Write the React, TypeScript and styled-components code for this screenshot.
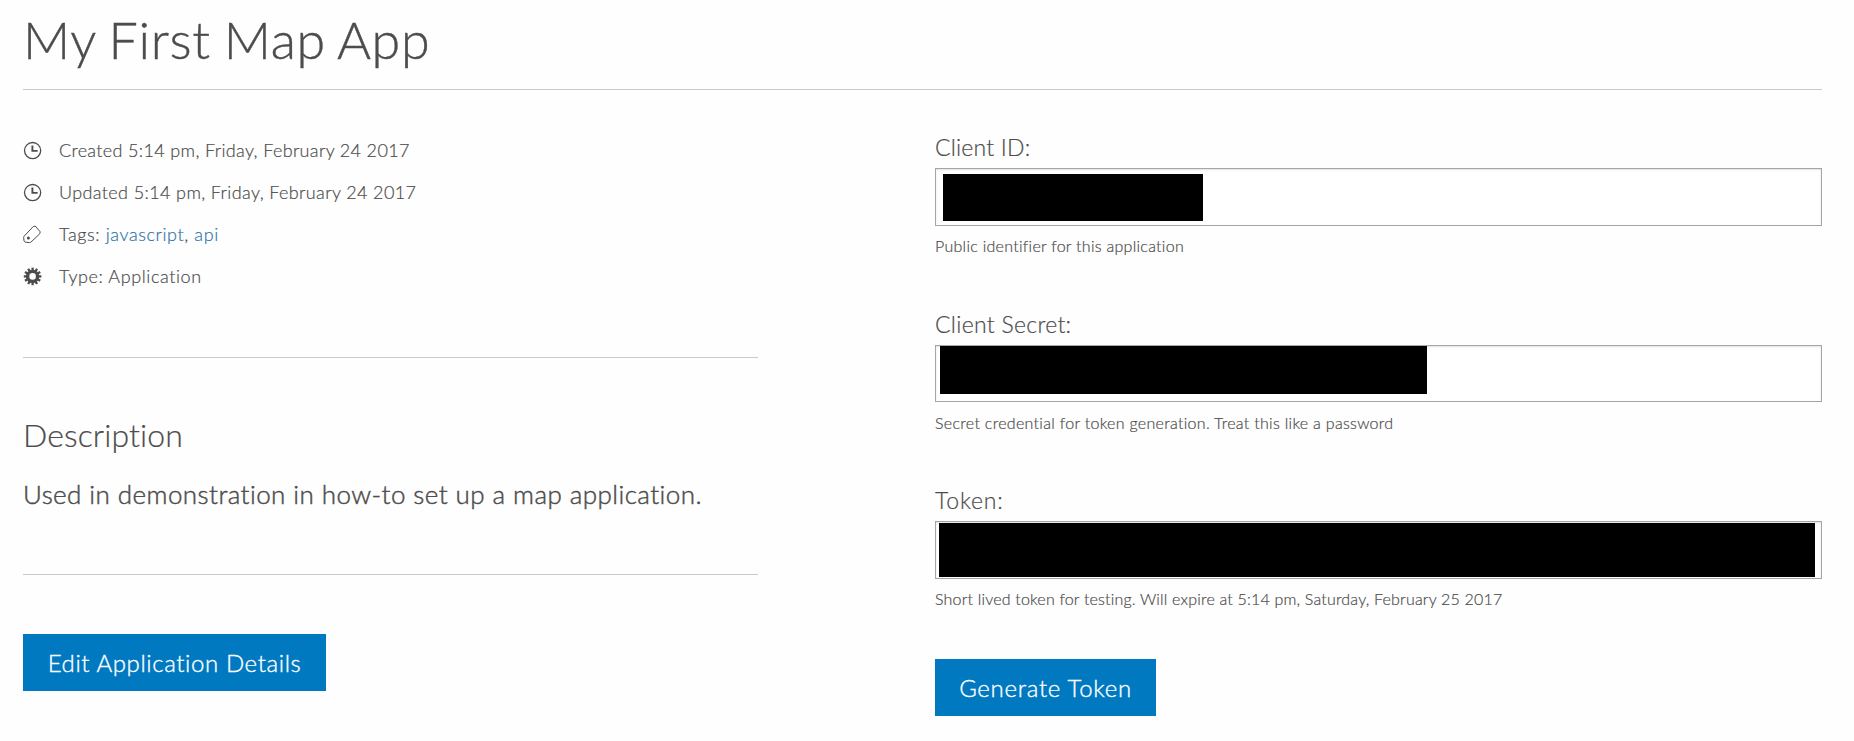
import React from "react";
import styled, { createGlobalStyle } from "styled-components";

const GlobalStyle = createGlobalStyle`
  *, *::before, *::after { box-sizing: border-box; }
  body {
    margin: 0;
    background: #fefefe;
    color: #4c4c4c;
    font-family: Lato, "Open Sans", sans-serif;
    font-weight: 300;
    -webkit-text-stroke: 0.2px currentColor;
  }
`;

const Page = styled.main`
  padding: 9px 32px 0 23px;
`;

const Header = styled.header`
  padding-bottom: 20px;
  border-bottom: 1px solid #cacaca;
`;

const Title = styled.h1`
  margin: 0;
  font-size: 52px;
  font-weight: 300;
  line-height: 60px;
  letter-spacing: 0.7px;
  word-spacing: -2px;
  -webkit-text-stroke-width: 0.4px;
`;

const Columns = styled.div`
  display: grid;
  grid-template-columns: 735px 887px;
  justify-content: space-between;
  align-items: start;
`;

const Details = styled.section`
  padding-top: 39px;
`;

const Credentials = styled.section`
  display: flex;
  flex-direction: column;
  align-items: flex-start;
  gap: 50.5px;
  padding-top: 42px;
`;

const MetaList = styled.ul`
  list-style: none;
  margin: 0;
  padding: 0 0 60px;
  border-bottom: 1px solid #cacaca;
`;

const MetaItem = styled.li<{ $tracking: number }>`
  display: flex;
  align-items: center;
  gap: 16px;
  height: 42px;
  font-size: 18px;
  line-height: 42px;
  letter-spacing: ${(p) => p.$tracking}px;
  white-space: pre;

  svg {
    flex: none;
    width: 20px;
    height: 20px;
  }
`;

const TagLink = styled.a`
  color: #2f74a5;
  text-decoration: none;
`;

const Description = styled.div`
  padding: 57px 0 60px;
  border-bottom: 1px solid #cacaca;
`;

const SubHeading = styled.h2`
  margin: 0 0 19px;
  font-size: 32px;
  font-weight: 300;
  line-height: 40px;
  letter-spacing: 0.1px;
`;

const Body = styled.p`
  margin: 0;
  font-size: 26px;
  line-height: 40px;
  letter-spacing: 0.43px;
  -webkit-text-stroke-width: 0.45px;
`;

const Button = styled.button<{ $width: number; $tracking: number }>`
  width: ${(p) => p.$width}px;
  height: 57px;
  padding: 0 0 1px;
  border: 0;
  background: #0079c1;
  color: #fff;
  font-family: inherit;
  font-size: 24px;
  font-weight: 300;
  letter-spacing: ${(p) => p.$tracking}px;
  white-space: nowrap;
  -webkit-text-stroke: 0.35px currentColor;
`;

const DetailsActions = styled.div`
  padding-top: 59px;
`;

const CredentialsActions = styled.div`
  margin-top: -2.5px;
`;

const Field = styled.div`
  width: 100%;
`;

const Label = styled.div<{ $tracking: number }>`
  margin-bottom: 6px;
  font-size: 23px;
  line-height: 30px;
  letter-spacing: ${(p) => p.$tracking}px;
`;

const ValueBox = styled.div<{ $top: number; $left: number }>`
  display: flex;
  align-items: flex-start;
  height: 57.5px;
  padding: ${(p) => p.$top}px 0 0 ${(p) => p.$left}px;
  border: 1px solid #a5a5a5;
  background: #fff;
  box-shadow: inset 0 1px 2px rgba(0, 0, 0, 0.12);
`;

const Redaction = styled.div<{ $width: number; $height: number }>`
  width: ${(p) => p.$width}px;
  height: ${(p) => p.$height}px;
  background: #000;
`;

const Help = styled.div<{ $tracking: number }>`
  margin-top: 8.5px;
  font-size: 16px;
  line-height: 24px;
  letter-spacing: ${(p) => p.$tracking}px;
`;

const ClockIcon = () => (
  <svg viewBox="0 0 20 20" fill="none" stroke="#4c4c4c">
    <circle cx="9.6" cy="10.6" r="8.1" strokeWidth="1.3" />
    <path d="M9.4 5.6V10.9H14.6" strokeWidth="1.9" />
  </svg>
);

const TagIcon = () => (
  <svg viewBox="0 0 20 20" fill="none" stroke="#4c4c4c">
    <path
      d="M10.2 2.6 12.2 2 17.2 7.8 16.8 9.7 8 18.1Q7.4 18.6 6.6 18.6L2.8 18.2Q1 18 .9 16.2L.7 13.4Q.7 12.6 1.3 12Z"
      strokeWidth="1"
      strokeLinejoin="round"
    />
    <circle cx="5.4" cy="13.9" r="1.5" fill="#4c4c4c" stroke="none" />
  </svg>
);

const GearIcon = () => (
  <svg viewBox="0 0 20 20" fill="none" stroke="#4c4c4c">
    <circle cx="9.6" cy="10.4" r="5" strokeWidth="3.4" />
    {Array.from({ length: 12 }, (_, i) => (
      <path
        key={i}
        d="M9.6 4.6V1.6"
        strokeWidth="2.3"
        transform={`rotate(${i * 30} 9.6 10.4)`}
      />
    ))}
  </svg>
);

const fields = [
  {
    label: "Client ID:",
    labelTracking: 0.2,
    box: { $top: 5, $left: 7 },
    fill: { $width: 260, $height: 47 },
    help: "Public identifier for this application",
    helpTracking: 0.28,
  },
  {
    label: "Client Secret:",
    labelTracking: 0.3,
    box: { $top: 0, $left: 4 },
    fill: { $width: 487, $height: 48 },
    help: "Secret credential for token generation. Treat this like a password",
    helpTracking: 0.3,
  },
  {
    label: "Token:",
    labelTracking: 0.8,
    box: { $top: 1, $left: 3 },
    fill: { $width: 876, $height: 54 },
    help: "Short lived token for testing. Will expire at 5:14 pm, Saturday, February 25 2017",
    helpTracking: 0.19,
  },
];

export default function App() {
  return (
    <>
      <GlobalStyle />
      <Page>
        <Header>
          <Title>My First Map App</Title>
        </Header>
        <Columns>
          <Details>
            <MetaList>
              <MetaItem $tracking={0.35}>
                <ClockIcon />
                <span>Created 5:14 pm, Friday, February 24 2017</span>
              </MetaItem>
              <MetaItem $tracking={0.38}>
                <ClockIcon />
                <span>Updated 5:14 pm, Friday, February 24 2017</span>
              </MetaItem>
              <MetaItem $tracking={0.6}>
                <TagIcon />
                <span>
                  Tags: <TagLink>javascript</TagLink>, <TagLink>api</TagLink>
                </span>
              </MetaItem>
              <MetaItem $tracking={0.6}>
                <GearIcon />
                <span>Type: Application</span>
              </MetaItem>
            </MetaList>
            <Description>
              <SubHeading>Description</SubHeading>
              <Body>Used in demonstration in how-to set up a map application.</Body>
            </Description>
            <DetailsActions>
              <Button $width={303} $tracking={0.6}>
                Edit Application Details
              </Button>
            </DetailsActions>
          </Details>
          <Credentials>
            {fields.map((f) => (
              <Field key={f.label}>
                <Label $tracking={f.labelTracking}>{f.label}</Label>
                <ValueBox {...f.box}>
                  <Redaction {...f.fill} />
                </ValueBox>
                <Help $tracking={f.helpTracking}>{f.help}</Help>
              </Field>
            ))}
            <CredentialsActions>
              <Button $width={221} $tracking={0.72}>
                Generate Token
              </Button>
            </CredentialsActions>
          </Credentials>
        </Columns>
      </Page>
    </>
  );
}
